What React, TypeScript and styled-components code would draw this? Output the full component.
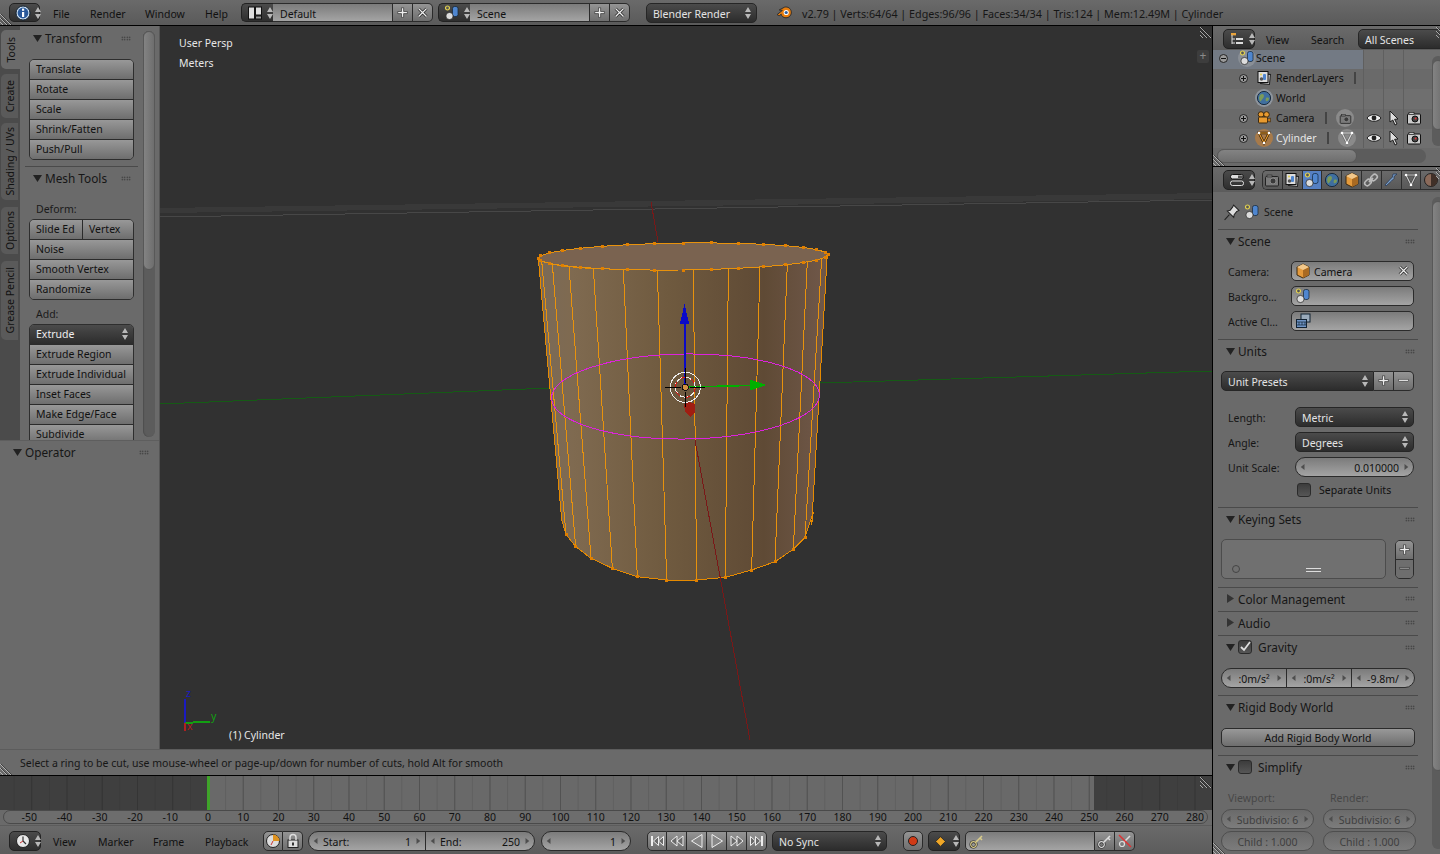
import React from 'react';
import styled, { createGlobalStyle } from 'styled-components';

const Global = createGlobalStyle`
  html, body { margin: 0; padding: 0; width: 1440px; height: 854px; overflow: hidden; background: #000; }
  body { font-family: "Noto Sans", "DejaVu Sans", sans-serif; font-size: 10.5px; color: #111; }
  * { box-sizing: border-box; }
`;

const Shell = styled.div`width:1440px;height:854px;display:flex;flex-direction:column;background:#000;`;
const TopBar = styled.div`
  position:relative;height:25px;flex:none;display:flex;align-items:center;padding-left:9px;
  background:linear-gradient(#6a6a6a,#5a5a5a);margin-bottom:1px;
`;
const Main = styled.div`flex:1;display:flex;min-height:0;gap:1px;`;
const LeftCol = styled.div`width:1212px;display:flex;flex-direction:column;gap:0;`;
const RightCol = styled.div`flex:1;display:flex;flex-direction:column;gap:1px;background:#000;`;
const Work = styled.div`height:723px;display:flex;flex:none;`;

/* generic widgets */
const Group = styled.div<{ $ml?: number }>`display:flex;height:19px;flex:none;margin-left:${p => p.$ml ?? 0}px;`;
const Selector = styled.div<{ $w: number }>`
  width:${p => p.$w}px;height:19px;flex:none;display:flex;align-items:center;gap:2px;padding-left:5px;
  background:linear-gradient(#4b4b4b,#2e2e2e);border:1px solid #222;border-radius:5px;
`;
const SelLeft = styled(Selector)`border-radius:5px 0 0 5px;border-right:0;`;
const Field = styled.div<{ $w?: number; $flex?: boolean; $pad?: number }>`
  width:${p => (p.$w ? p.$w + 'px' : 'auto')};${p => (p.$flex ? 'flex:1;' : '')}
  height:100%;flex-shrink:0;display:flex;align-items:center;padding:2px 0 0 ${p => p.$pad ?? 7}px;gap:4px;
  color:#111;background:linear-gradient(#7b7b7b,#a4a4a4);border:1px solid #2b2b2b;border-left:0;white-space:nowrap;
`;
const Square = styled.div<{ $w?: number; $last?: boolean; $dim?: boolean; $first?: boolean }>`
  width:${p => p.$w ?? 20}px;height:100%;flex:none;display:flex;align-items:center;justify-content:center;
  background:linear-gradient(#949494,#6e6e6e);border:1px solid #2b2b2b;border-left:${p => (p.$first ? '1px solid #2b2b2b' : '0')};
  border-radius:${p => (p.$last && p.$first ? '5px' : p.$last ? '0 5px 5px 0' : p.$first ? '5px 0 0 5px' : '0')};
`;
const DarkLabel = styled.span`color:#e4e4e4;white-space:nowrap;padding-top:2px;`;
const Dropdown = styled.div<{ $w?: number; $ml?: number; $flex?: boolean; $square?: boolean }>`
  ${p => (p.$w ? `width:${p.$w}px;` : '')}${p => (p.$flex ? 'flex:1;' : '')}
  height:20px;flex-shrink:0;margin-left:${p => p.$ml ?? 0}px;display:flex;align-items:center;justify-content:space-between;
  padding:0 3px 0 6px;color:#e4e4e4;background:linear-gradient(#4b4b4b,#2c2c2c);border:1px solid #262626;
  border-radius:${p => (p.$square ? '5px 0 0 5px' : '5px')};white-space:nowrap;
`;
const MenuItem = styled.span<{ $ml?: number; $w: number }>`
  margin-left:${p => p.$ml ?? 0}px;width:${p => p.$w}px;flex:none;padding-top:2px;color:#111;white-space:nowrap;
`;
const StatText = styled.span`margin-left:9px;padding-top:2px;color:#161616;white-space:nowrap;font-size:10.75px;`;
const Hatch = styled.svg<{ $corner: string }>`
  position:absolute;width:12px;height:12px;z-index:5;${p => p.$corner};
`;

/* shelf */
const Shelf = styled.div`width:160px;flex:none;display:flex;flex-direction:column;border-right:1px solid #555;`;
const ShelfTop = styled.div`position:relative;height:414px;flex:none;display:flex;background:#6a6a6a;overflow:hidden;`;
const TabStrip = styled.div`width:20px;flex:none;background:#4b4b4b;display:flex;flex-direction:column;align-items:flex-end;`;
const Tab = styled.div<{ $h: number; $active?: boolean; $mt: number }>`
  width:${p => (p.$active ? 19 : 17)}px;height:${p => p.$h}px;margin-top:${p => p.$mt}px;
  margin-right:${p => (p.$active ? 0 : 2)}px;
  background:${p => (p.$active ? '#6a6a6a' : '#5a5a5a')};border-radius:5px 0 0 5px;
  display:flex;align-items:center;justify-content:center;
  color:#111;
`;
const TabText = styled.span`writing-mode:vertical-rl;transform:rotate(180deg);white-space:nowrap;`;
const ShelfBody = styled.div`width:118px;flex:none;padding:0 0 0 5px;`;
const ShelfHeader = styled.div<{ $h?: number }>`
  height:${p => p.$h ?? 24}px;display:flex;align-items:center;padding:0 7px 0 8px;font-size:11.8px;color:#161616;
  gap:3px;
`;
const Grip = styled.div`margin-left:auto;width:10px;height:5px;flex:none;
  background-image:radial-gradient(circle,#2f2f2f 0.6px,transparent 0.9px);background-size:2.5px 2.5px;`;
const Sep = styled.div`height:1px;background:#4a4a4a;margin-top:6px;`;
const ShelfGroup = styled.div<{ $mt?: number }>`
  margin:${p => p.$mt ?? 0}px 0 0 4px;width:105px;border:1px solid #2e2e2e;border-radius:5px;
  display:flex;flex-direction:column;overflow:hidden;flex:none;
`;
const ToolBtn = styled.div<{ $dark?: boolean }>`
  height:20px;flex:none;display:flex;align-items:center;justify-content:space-between;padding:0 3px 1px 6px;
  color:${p => (p.$dark ? '#eee' : '#111')};
  background:${p => (p.$dark ? 'linear-gradient(#4b4b4b,#2c2c2c)' : 'linear-gradient(#989898,#6e6e6e)')};
  & + & { border-top:1px solid #2b2b2b; }
  &:first-child { height:19px; }
  white-space:nowrap;
`;
const ToolRow = styled.div`display:flex;height:19px;flex:none;& + ${ToolBtn}{border-top:1px solid #2b2b2b;}`;
const ToolCell = styled(ToolBtn)<{ $w: number }>`width:${p => p.$w}px;&&{height:100%;} & + &{border-top:0;border-left:1px solid #2b2b2b;}`;
const ShelfLabel = styled.div<{ $mt: number }>`margin:${p => p.$mt}px 0 0 11px;height:14px;line-height:14px;color:#1a1a1a;`;
const Track = styled.div<{ $h: number }>`
  position:absolute;left:143px;top:5px;width:12px;height:${p => p.$h}px;border-radius:6px;background:#5c5c5c;
  box-shadow:inset 1px 0 1px #4e4e4e;
`;
const Thumb = styled.div<{ $h: number }>`height:${p => p.$h}px;border-radius:6px;background:linear-gradient(90deg,#838383,#6e6e6e);border:1px solid #585858;`;
const Operator = styled.div`flex:1;background:#6a6a6a;border-top:1px solid #5e5e5e;position:relative;z-index:1;`;
const OpHeader = styled.div`height:24px;display:flex;align-items:center;gap:3px;padding:0 10px 2px 13px;font-size:11.8px;color:#161616;`;

/* viewport */
const Viewport = styled.div`position:relative;flex:1;background:#313131;overflow:hidden;`;
const Scene3D = styled.svg`position:absolute;left:0;top:0;width:1052px;height:723px;shape-rendering:crispEdges;`;
const VpLabel = styled.div<{ $l: number; $t: number; $c?: string }>`position:absolute;left:${p => p.$l}px;top:${p => p.$t}px;color:${p => p.$c ?? '#e6e6e6'};white-space:nowrap;line-height:14px;`;
const ExpandBtn = styled.div`position:absolute;right:3px;top:24px;width:12px;height:13px;background:#3d3d3d;color:#8a8a8a;
  font-size:12px;line-height:12px;text-align:center;border-radius:2px;`;
const HintBar = styled.div`height:26px;flex:none;display:flex;align-items:center;padding:0 0 0 20px;background:#6a6a6a;color:#161616;position:relative;white-space:nowrap;border-top:1px solid #5c5c5c;`;

/* timeline */
const Timeline = styled.div`flex:1;display:flex;flex-direction:column;border-top:1px solid #000;position:relative;background:#6a6a6a;`;
const Tracks = styled.div`
  height:34px;flex:none;display:flex;
  background-image:linear-gradient(90deg,#525252 1px,transparent 1px),linear-gradient(90deg,#5f5f5f 1px,transparent 1px);
  background-size:35.25px 100%,17.625px 100%;background-position:31.25px 0,13.6px 0;background-color:#696969;
`;
const OutRange = styled.div<{ $w: number }>`width:${p => p.$w}px;flex:none;height:100%;background:rgba(30,30,30,.55);`;
const InRange = styled.div`flex:1;`;
const FrameMark = styled.div`width:3px;height:100%;background:#3fa32a;flex:none;`;
const Ruler = styled.div`
  height:14px;margin:0 4px 0 3px;padding-left:10.1px;flex:none;display:flex;align-items:center;border:1px solid #4a4a4a;border-radius:7px;
  background:#6d6d6d;color:#111;
`;
const Tick = styled.span<{ $neg?: boolean }>`width:35.25px;flex:none;text-align:center;line-height:12px;padding-right:${p => (p.$neg ? 5 : 0)}px;`;
const TimeHead = styled.div`flex:1;display:flex;align-items:center;padding:2px 0 0 9px;margin-top:1px;border-top:1px solid #5c5c5c;background:linear-gradient(#6a6a6a,#5c5c5c);`;
const Pill = styled.div<{ $w?: number; $ml?: number; $dim?: boolean; $flex?: boolean }>`
  ${p => (p.$w ? `width:${p.$w}px;` : '')}${p => (p.$flex ? 'flex:1;min-width:0;' : '')}
  height:20px;flex-shrink:0;margin-left:${p => p.$ml ?? 0}px;display:flex;align-items:center;
  border:1px solid ${p => (p.$dim ? '#4e4e4e' : '#2b2b2b')};border-radius:10px;color:${p => (p.$dim ? '#3f3f3f' : '#111')};
  background:${p => (p.$dim ? 'linear-gradient(#6a6a6a,#7c7c7c)' : 'linear-gradient(#7b7b7b,#a4a4a4)')};overflow:hidden;
`;
const PillCell = styled.div<{ $w?: number; $div?: boolean }>`
  ${p => (p.$w ? `width:${p.$w}px;flex:none;` : 'flex:1;')}height:100%;display:flex;align-items:center;justify-content:space-between;
  padding:0 4px;gap:4px;white-space:nowrap;${p => (p.$div ? 'border-left:1px solid #2b2b2b;' : '')}
`;
const CellText = styled.span<{ $grow?: boolean; $right?: boolean }>`
  ${p => (p.$grow ? 'flex:1;' : '')}${p => (p.$right ? 'text-align:right;' : '')}white-space:nowrap;padding-top:2px;
`;

/* outliner */
const Outliner = styled.div`height:140px;flex:none;position:relative;display:flex;flex-direction:column;background:#6a6a6a;`;
const OutHead = styled.div`height:24px;flex:none;display:flex;align-items:center;padding:2px 0 0 10px;background:linear-gradient(#6a6a6a,#5c5c5c);`;
const OutTree = styled.div`position:relative;height:98px;flex:none;overflow:hidden;
  &::before{content:"";position:absolute;left:30px;top:16px;bottom:0;width:1px;background:#2f2f2f;}
`;
const Row = styled.div<{ $h?: number; $odd?: boolean }>`
  height:${p => p.$h ?? 20}px;flex:none;display:flex;align-items:center;position:relative;
  background:${p => (p.$odd ? '#6f6f6f' : '#6a6a6a')};
`;
const RowMain = styled.div<{ $hi?: boolean }>`
  width:150px;height:100%;flex:none;display:flex;align-items:center;position:relative;padding-bottom:${p => (p.$hi ? 3 : 2)}px;
  background:${p => (p.$hi ? '#737a84' : 'transparent')};
`;
const RowCol = styled.div`width:20px;height:100%;flex:none;display:flex;align-items:center;justify-content:center;padding-bottom:2px;border-left:1px solid #5f5f5f;`;
const Expander = styled.div<{ $x: number }>`position:absolute;left:${p => p.$x}px;width:9px;height:9px;border:1px solid #222;border-radius:50%;background:#9a9a9a;
  color:#111;display:flex;align-items:center;justify-content:center;z-index:2;
  &::before{content:"";position:absolute;width:5px;height:1px;background:#111;left:1px;top:3px;}
`;
const ExpanderPlus = styled(Expander)`&::after{content:"";position:absolute;width:1px;height:5px;background:#111;left:3px;top:1px;}`;
const RowIcon = styled.div<{ $x: number; $bg?: string }>`position:absolute;left:${p => p.$x}px;width:18px;height:18px;border-radius:50%;display:flex;align-items:center;justify-content:center;background:${p => p.$bg ?? 'transparent'};`;
const RowName = styled.span<{ $x: number; $light?: boolean }>`position:absolute;left:${p => p.$x}px;white-space:nowrap;color:${p => (p.$light ? '#e6e6e6' : '#111')};`;
const RowBar = styled.div<{ $x: number }>`position:absolute;left:${p => p.$x}px;width:2px;height:12px;background:#444;`;
const HScroll = styled.div`position:absolute;left:4px;right:22px;top:123px;height:14px;border-radius:7px;background:#5c5c5c;`;
const HThumb = styled.div`width:140px;height:100%;border-radius:7px;background:linear-gradient(#838383,#6e6e6e);border:1px solid #585858;`;
const VScroll = styled.div<{ $t: number; $h: number }>`position:absolute;right:4px;top:${p => p.$t}px;width:12px;height:${p => p.$h}px;border-radius:6px;background:#5c5c5c;`;
const VThumb = styled.div<{ $h: number }>`height:${p => p.$h}px;margin-top:4px;border-radius:6px;background:linear-gradient(90deg,#838383,#6e6e6e);border:1px solid #585858;`;

/* properties */
const Props = styled.div`flex:1;position:relative;background:#6a6a6a;overflow:hidden;display:flex;flex-direction:column;`;
const PropHead = styled.div`height:25px;flex:none;display:flex;align-items:center;padding-left:10px;background:linear-gradient(#6a6a6a,#5c5c5c);`;
const TabsRow = styled.div`display:flex;height:20px;margin-left:7px;border:1px solid #2e2e2e;border-right:0;border-radius:5px 0 0 5px;overflow:hidden;`;
const PropTab = styled.div<{ $active?: boolean }>`width:19.8px;flex:none;height:100%;display:flex;align-items:center;justify-content:center;
  background:${p => (p.$active ? '#5680c2' : 'linear-gradient(#6a6a6a,#585858)')};border-right:1px solid #2e2e2e;`;
const Context = styled.div`height:37px;flex:none;display:flex;align-items:center;gap:4px;padding:3px 0 0 10px;color:#161616;`;
const PropBody = styled.div`width:200px;margin-left:5px;`;
const Panel = styled.div<{ $pb?: number }>`border-top:1px solid #4a4a4a;padding-bottom:${p => p.$pb ?? 0}px;`;
const PanelHead = styled.div<{ $h?: number }>`height:${p => p.$h ?? 24}px;display:flex;align-items:center;padding:0 3px 2px 8px;gap:3px;font-size:11.8px;color:#161616;white-space:nowrap;`;
const PanelContent = styled.div<{ $pt?: number; $gap?: number }>`padding:${p => p.$pt ?? 7}px 4px 0 3px;display:flex;flex-direction:column;gap:${p => p.$gap ?? 5}px;`;
const LabelRow = styled.div<{ $mt?: number }>`display:flex;align-items:center;height:20px;padding-left:7px;margin-top:${p => p.$mt ?? 0}px;`;
const RowLabel = styled.span<{ $w: number }>`width:${p => p.$w}px;flex:none;padding-top:2px;color:#161616;white-space:nowrap;overflow:hidden;`;
const BoxField = styled.div`flex:1;height:20px;display:flex;align-items:center;gap:3px;padding:0 2px 0 3px;color:#111;
  background:linear-gradient(#7b7b7b,#a4a4a4);border:1px solid #2b2b2b;border-radius:5px;`;
const FieldText = styled.span`padding-top:2px;white-space:nowrap;`;
const ClearSlot = styled.span`margin-left:auto;display:flex;`;
const PresetRow = styled.div`display:flex;height:20px;`;
const CheckRow = styled.div`display:flex;align-items:center;height:16px;padding-left:76px;gap:8px;`;
const Check = styled.div`width:14px;height:14px;flex:none;border-radius:3px;background:linear-gradient(#3c3c3c,#565656);border:1px solid #2b2b2b;display:flex;align-items:center;justify-content:center;`;
const ListRow = styled.div`display:flex;gap:9px;`;
const ListBox = styled.div`width:166px;height:40px;position:relative;border:1px solid #4c4c4c;border-radius:5px;background:#707070;`;
const ListCols = styled.div`width:19px;height:39px;margin-top:1px;display:flex;flex-direction:column;border:1px solid #2b2b2b;border-radius:5px;overflow:hidden;`;
const ListBtn = styled.div<{ $dim?: boolean }>`flex:1;display:flex;align-items:center;justify-content:center;background:${p => (p.$dim ? '#6e6e6e' : 'linear-gradient(#949494,#6e6e6e)')};
  ${p => (p.$dim ? 'border-top:1px solid #2b2b2b;' : '')}`;
const Grabber = styled.div`position:absolute;left:84px;bottom:6px;width:15px;height:4px;border-top:1px solid #ddd;border-bottom:1px solid #ddd;`;
const AddMini = styled.div`position:absolute;left:10px;bottom:5px;width:8px;height:8px;border:1px solid #444;border-radius:50%;`;
const FullBtn = styled.div`width:194px;height:19px;display:flex;align-items:center;justify-content:center;padding-top:1px;color:#111;
  background:linear-gradient(#989898,#6e6e6e);border:1px solid #2b2b2b;border-radius:5px;`;
const TwoCol = styled.div`display:flex;gap:9px;`;
const Col = styled.div`width:93px;display:flex;flex-direction:column;gap:2px;flex:none;`;
const ColLabel = styled.div`height:14px;margin:0 0 2px 7px;color:#474747;line-height:14px;`;
const Centered = styled(PillCell)`justify-content:center;`;

/* icons */
const Ico = styled.svg<{ $s?: number }>`width:${p => p.$s ?? 16}px;height:${p => p.$s ?? 16}px;flex:none;display:block;`;
const I = ({ s, children }: { s?: number; children: React.ReactNode }) => <Ico $s={s} viewBox="0 0 16 16">{children}</Ico>;

const ArrowPair = styled.svg`width:10px;height:14px;flex:none;display:block;`;
const UpDown = ({ c = '#b8b8b8' }: { c?: string }) => (
  <ArrowPair viewBox="0 0 10 14"><path d="M5 1l3 5H2zM5 13l3-5H2z" fill={c} /></ArrowPair>
);
const Tri = ({ open }: { open?: boolean }) => (
  <Ico $s={9} viewBox="0 0 9 9">{open ? <path d="M0 1h9L4.500 8z" fill="#222" /> : <path d="M1 0l7 4.500L1 9z" fill="#333" />}</Ico>
);
const ArrL = () => <Ico $s={6} viewBox="0 0 6 8"><path d="M5 0v8L0 4z" fill="#4e4e4e" /></Ico>;
const ArrR = () => <Ico $s={6} viewBox="0 0 6 8"><path d="M1 0v8l5-4z" fill="#4e4e4e" /></Ico>;
const Info = () => <I><circle cx="8" cy="8" r="7" fill="#cfe0f0" stroke="#123" /><circle cx="8" cy="8" r="5.400" fill="#28589a" /><rect x="7" y="7" width="2.200" height="5" fill="#fff" /><rect x="7" y="3.600" width="2.200" height="2.200" fill="#fff" /></I>;
const LayoutI = () => <I><rect x="1.500" y="2" width="6" height="12" fill="#ddd" stroke="#111" /><rect x="8.500" y="2" width="6" height="8" fill="#ddd" stroke="#111" /><rect x="8.500" y="11" width="6" height="3" fill="#999" stroke="#111" /></I>;
const SceneI = () => <I><circle cx="3.500" cy="3" r="2" fill="#555" stroke="#e3d24f" strokeWidth="1.200" /><rect x="8.500" y="1.500" width="5.500" height="10" rx="2" fill="#4f86cf" stroke="#123" strokeWidth=".7" /><circle cx="5.500" cy="11" r="3.600" fill="#ddd" stroke="#222" strokeWidth=".7" /></I>;
const PlusI = ({ c = '#eee' }: { c?: string }) => <I s={14}><path d="M6.300 2h2.400v4.300H13v2.400H8.700V13H6.300V8.700H2V6.300h4.300z" fill={c} stroke="#222" strokeWidth=".7" /></I>;
const MinusI = ({ c = '#ddd' }: { c?: string }) => <I s={14}><rect x="2" y="6" width="11" height="2.400" fill={c} stroke="#333" strokeWidth=".6" /></I>;
const XI = () => <I s={14}><path d="M3 3l9 9M12 3l-9 9" stroke="#222" strokeWidth="3.200" /><path d="M3 3l9 9M12 3l-9 9" stroke="#eee" strokeWidth="1.600" /></I>;
const Logo = () => <I s={17}><path d="M1 10l5-4-3-.4L8 3c3-.8 6 1 6.400 4.400.3 3-2 5.600-5 5.600-2.500 0-4.200-1.600-4.500-3.400L3 11z" fill="#e87d0d" stroke="#2b2b2b" strokeWidth=".9" /><circle cx="9.600" cy="8" r="2.400" fill="#fff" /><circle cx="9.600" cy="8" r="1.500" fill="#2f5e9c" /></I>;
const OutI = () => <I><rect x="2" y="2" width="5" height="2.400" fill="#e8a33c" /><path d="M3 4v9M3 8h3M3 12h3" stroke="#ddd" /><rect x="7" y="7" width="7" height="2" fill="#ddd" /><rect x="7" y="11" width="7" height="2" fill="#ddd" /></I>;
const PropsI = () => <I><rect x="1.500" y="2.500" width="13" height="4.500" rx="2" fill="#ddd" stroke="#111" /><rect x="1.500" y="9" width="13" height="4.500" rx="2" fill="none" stroke="#ddd" /><rect x="9" y="3.500" width="5" height="2.600" fill="#555" /></I>;
const CubeI = () => <I><path d="M8 1l6 3v8l-6 3-6-3V4z" fill="#e49a3c" stroke="#3c2a10" /><path d="M8 7l6-3v8l-6 3z" fill="#a96a22" /><path d="M2 4l6 3 6-3-6-3z" fill="#f2c78a" /></I>;
const CamOrange = () => <I><circle cx="5" cy="4.500" r="2.800" fill="#e89a2f" stroke="#3c2a10" /><circle cx="10.500" cy="4.500" r="2.800" fill="#e89a2f" stroke="#3c2a10" /><rect x="2.500" y="7" width="9" height="6" rx="1" fill="#e89a2f" stroke="#3c2a10" /><path d="M11.500 9l3-1v4l-3-1z" fill="#c67a1b" stroke="#3c2a10" strokeWidth=".6" /></I>;
const MeshI = ({ c = '#f0a030', d = '#2a1a05' }: { c?: string; d?: string }) => <I><path d="M3 3h10L8 13z" fill="none" stroke={d} strokeWidth="2.400" /><path d="M3 3h10L8 13z" fill="none" stroke={c} strokeWidth="1.100" /><circle cx="3" cy="3" r="1.300" fill="#fff" /><circle cx="13" cy="3" r="1.300" fill="#fff" /><circle cx="8" cy="13" r="1.300" fill="#fff" /></I>;
const WorldI = () => <I><circle cx="8" cy="8" r="6.600" fill="#3f6f9f" stroke="#1a2c40" /><path d="M4 5c2-2 4-1 4 1S6 9 5 11 2 8 4 5zM10 8c2-1 3 0 3 1s-2 3-3 2 0-2 0-3z" fill="#7a9a5a" /></I>;
const LayersI = () => <I><rect x="5" y="4" width="9" height="10" fill="#bbb" stroke="#222" transform="rotate(6 9 9)" /><rect x="2" y="1.500" width="10" height="11" fill="#ddd" stroke="#111" /><circle cx="5" cy="4.500" r="1" fill="#e3d24f" /><rect x="7" y="4" width="3" height="6" rx="1" fill="#4f86cf" /><circle cx="5.500" cy="9" r="1.800" fill="#555" /></I>;
const EyeI = () => <I><path d="M1 8c3-4.500 11-4.500 14 0-3 4.500-11 4.500-14 0z" fill="#eee" stroke="#222" /><circle cx="8" cy="8" r="2.400" fill="#222" /></I>;
const CursorI = () => <I><path d="M4 1l8 8-3.400.3L11 14l-2 1-2.200-5L4 12z" fill="#ddd" stroke="#111" strokeWidth=".9" /></I>;
const RenderI = () => <I><rect x="1.500" y="4" width="13" height="10" rx="1" fill="#ccc" stroke="#111" /><rect x="3" y="2.500" width="5" height="2" fill="#ccc" stroke="#111" strokeWidth=".6" /><circle cx="9" cy="9" r="3" fill="#444" stroke="#111" /><circle cx="9.600" cy="8.600" r="1" fill="#d33" /></I>;
const PinI = () => <I s={17}><path d="M10 1l5 5-2 1-2.500 3-.4 2.600-6-6L6.700 6l2.300-3zM6 10l-4.500 5" fill="#ddd" stroke="#222" /></I>;
const LinkI = () => <I><path d="M6 10L10 6" stroke="#bbb" strokeWidth="2" /><rect x="1.500" y="8" width="7" height="5" rx="2.400" fill="none" stroke="#bbb" strokeWidth="1.600" transform="rotate(-45 5 10.500)" /><rect x="7.500" y="3" width="7" height="5" rx="2.400" fill="none" stroke="#bbb" strokeWidth="1.600" transform="rotate(-45 11 5.500)" /></I>;
const WrenchI = () => <I><path d="M14 2l-3 2.500v2L8.500 9 3 14 2 13l5-5.500L9.500 5l.5-3z" fill="#7b9fc8" stroke="#1e3050" strokeWidth=".7" /></I>;
const MatI = () => <I><circle cx="8" cy="8" r="6.500" fill="#8a6a5a" stroke="#222" /><path d="M8 1.500A6.500 6.500 0 0 1 8 14.500z" fill="#403028" /></I>;
const CamGrey = ({ s }: { s?: number }) => <I s={s}><rect x="1.500" y="4.500" width="13" height="9.500" rx="1" fill="#7a7a7a" stroke="#222" /><circle cx="9" cy="9" r="3" fill="#3a3a3a" stroke="#888" /><rect x="3" y="3" width="5" height="2" fill="#7a7a7a" stroke="#222" strokeWidth=".6" /></I>;
const ClipI = () => <I><rect x="6" y="1" width="9" height="8" fill="#9ab" stroke="#123" /><rect x="1.500" y="6.500" width="10" height="8" fill="#6f95c7" stroke="#123" /><path d="M1.500 9h10M1.500 12h10M4 9v3M7 9v3M10 9v3" stroke="#123" strokeWidth=".7" /></I>;
const CheckMark = () => <Ico $s={12} viewBox="0 0 12 12"><path d="M2 6l3 3 6-8" fill="none" stroke="#ddd" strokeWidth="1.800" /></Ico>;
const ClockI = () => <I><circle cx="8" cy="8" r="6.500" fill="#e8e8e8" stroke="#222" /><path d="M8 8V3.500M8 8l3 3" stroke="#333" strokeWidth="1.200" /><path d="M8 8l-3 2" stroke="#c33" /></I>;
const SyncI = () => <I><circle cx="8" cy="8" r="6.500" fill="#ddd" stroke="#222" /><path d="M8 8V1.500A6.500 6.500 0 0 1 14.500 8z" fill="#e09320" /><path d="M8 8l-2 4" stroke="#c33" /></I>;
const LockI = () => <I><rect x="3" y="7" width="10" height="7.500" fill="#ddd" stroke="#222" /><path d="M5 7V4.500a3 3 0 0 1 6 0V7" fill="none" stroke="#ddd" strokeWidth="1.500" /><rect x="7" y="9.500" width="2" height="3" fill="#333" /></I>;
const Jump = ({ dir, kind }: { dir: 'l' | 'r'; kind: 'end' | 'key' | 'play' }) => {
  const flip = dir === 'l' ? 'translate(16 0) scale(-1 1)' : undefined;
  const s = { fill: '#6a6a6a', stroke: '#eee', strokeWidth: 1 };
  return (
    <I>
      <g transform={flip}>
        {kind === 'play' && <path d="M3 1.500L13.500 8 3 14.500z" {...s} fill="#888" />}
        {kind === 'key' && <><path d="M2 3l6 5-6 5z" {...s} /><path d="M8 3l6 5-6 5z" {...s} /></>}
        {kind === 'end' && <><path d="M1.500 3.500l5 4.500-5 4.500z" {...s} /><path d="M6.500 3.500l5 4.500-5 4.500z" {...s} /><path d="M13 3v10" stroke="#eee" strokeWidth="2" /></>}
      </g>
    </I>
  );
};
const RecordI = () => <I><circle cx="8" cy="8" r="4.500" fill="#d03a16" stroke="#222" /></I>;
const DiamondI = () => <I s={13}><path d="M8 2l6 6-6 6-6-6z" fill="#f0a727" stroke="#222" /></I>;
const KeyI = ({ c = '#d9cc8a' }: { c?: string }) => <I><circle cx="4.500" cy="11.500" r="2.800" fill="none" stroke="#222" strokeWidth="2.400" /><circle cx="4.500" cy="11.500" r="2.800" fill="none" stroke={c} strokeWidth="1.200" /><path d="M6.500 9.500L13 3M11 5l2 2" stroke={c} strokeWidth="1.600" /></I>;
const KeyXI = () => <I><circle cx="5" cy="11" r="2.500" fill="none" stroke="#ddd" strokeWidth="1.200" /><path d="M7 9l6-6" stroke="#ddd" strokeWidth="1.600" /><path d="M2 2l12 12" stroke="#d33" strokeWidth="1.500" /></I>;

const HatchMark = ({ corner }: { corner: string }) => (
  <Hatch $corner={corner} viewBox="0 0 12 12"><path d="M0 1l11 11M0 5l7 7M0 9l3 3" stroke="#c4c4c4" strokeWidth=".8" /><path d="M1 1l11 11M1 5l7 7" stroke="#222" strokeWidth=".6" /></Hatch>
);

/* 3D scene in page coordinates */
const zx = (z: number) => 520 + z / 3;
const zy = (z: number) => 230 + z / 3;
const tops: [number, number][] = [[65, 92], [97, 103], [147, 110], [220, 116], [310, 118], [412, 118], [520, 118], [625, 115], [720, 110], [802, 103], [862, 95], [905, 85]];
const bots: [number, number][] = [[138, 913], [167, 950], [213, 985], [277, 1015], [352, 1040], [440, 1050], [530, 1050], [616, 1042], [695, 1020], [765, 995], [820, 958], [855, 922]];
const pt = ([x, y]: [number, number]) => `${zx(x).toFixed(1)},${zy(y).toFixed(1)}`;
const body = [[55, 85], ...tops, [922, 72], [875, 885], [880, 845], ...[...bots].reverse(), [125, 870]] as [number, number][];

const ringVerts: [number, number][] = Array.from({ length: 32 }, (_, i) => {
  const a = (i / 32) * Math.PI * 2;
  return [683 + 145 * Math.cos(a), 256.5 - 1.8 * Math.cos(a) + 13.5 * Math.sin(a)];
});

const Scene = () => (
  <Scene3D viewBox="160 26 1052 723">
    <defs>
      <linearGradient id="body" x1="0" x2="1" y1="0" y2="0">
        <stop offset="0" stopColor="#7a6a58" />
        <stop offset=".12" stopColor="#7f6a50" />
        <stop offset=".45" stopColor="#6f5a3f" />
        <stop offset=".78" stopColor="#5f4a35" />
        <stop offset="1" stopColor="#70584a" />
      </linearGradient>
    </defs>
    <path d="M160 208L1212 193V199L160 213z" fill="#393939" />
    <path d="M160 217L1212 200" stroke="#474747" strokeWidth="1" fill="none" />
    <path d="M160 404L551 388M820 383L1212 371" stroke="#155a15" strokeWidth="1" />
    <path d="M651 202L658 242" stroke="#7a1818" strokeWidth="1" />
    <polygon points={body.map(pt).join(' ')} fill="url(#body)" stroke="#e68a00" strokeWidth="1" />
    {tops.map((t, i) => (
      <line key={i} x1={zx(t[0])} y1={zy(t[1])} x2={zx(bots[i][0])} y2={zy(bots[i][1])} stroke="#e8920c" strokeWidth="1" />
    ))}
    <polygon points={ringVerts.map(v => v.join(',')).join(' ')} fill="#7a6350" stroke="#e8920c" strokeWidth="1" />
    {[...ringVerts, ...bots.map(b => [zx(b[0]), zy(b[1])] as [number, number])].map((v, i) => (
      <rect key={i} x={v[0] - 1.5} y={v[1] - 1.5} width="3" height="3" fill="#e07f00" />
    ))}
    <path d="M695 440L750 740" stroke="#7a1818" strokeWidth="1" />
    <ellipse cx="685.500" cy="396.500" rx="134" ry="42.500" transform="rotate(-0.7 685.500 396.500)" fill="none" stroke="#dd22dd" strokeWidth="1" />
    <path d="M685 387V324" stroke="#0a0ac8" strokeWidth="1.500" />
    <path d="M680 323.500h9L684.500 304z" fill="#0a0ac8" />
    <path d="M685 387L750 385.500" stroke="#00b000" strokeWidth="1.500" />
    <path d="M750 379.500v11L767 385z" fill="#00b000" />
    <path d="M684 404l5-2 6 2 0 8-5 5-5-6z" fill="#a01e12" />
    <circle cx="685.300" cy="387.300" r="15" fill="none" stroke="#eee" strokeWidth="1" />
    <circle cx="685.300" cy="387.300" r="10" fill="none" stroke="#eee" strokeWidth="1" />
    <circle cx="685.300" cy="387.300" r="10" fill="none" stroke="#e01010" strokeWidth="1" strokeDasharray="5.200 5.270" />
    <path d="M665 387.300H681M690 387.300H705M685.300 367.500V383M685.300 392V407" stroke="#000" strokeWidth="1" />
    <circle cx="685.300" cy="387.300" r="3" fill="#d09040" stroke="#111" />
    <path d="M185 723V699" stroke="#1a1ac0" strokeWidth="2" />
    <path d="M185 723L210 721.500" stroke="#12a012" strokeWidth="2" />
    <path d="M185 723V731" stroke="#b02020" strokeWidth="2" />
  </Scene3D>
);

const tools1 = ['Translate', 'Rotate', 'Scale', 'Shrink/Fatten', 'Push/Pull'];
const tools2 = ['Noise', 'Smooth Vertex', 'Randomize'];
const tools3 = ['Extrude Region', 'Extrude Individual', 'Inset Faces', 'Make Edge/Face', 'Subdivide'];
const frames = Array.from({ length: 34 }, (_, i) => (i - 5) * 10);

export default function App() {
  return (
    <Shell>
      <Global />
      <TopBar>
        <HatchMark corner="left:0;bottom:0;" />
        <Selector $w={31}><Info /><UpDown /></Selector>
        <MenuItem $ml={13} $w={37}>File</MenuItem>
        <MenuItem $w={55}>Render</MenuItem>
        <MenuItem $w={60}>Window</MenuItem>
        <MenuItem $w={36}>Help</MenuItem>
        <Group>
          <SelLeft $w={32}><LayoutI /><UpDown /></SelLeft>
          <Field $w={120}>Default</Field>
          <Square><PlusI /></Square>
          <Square $last><XI /></Square>
        </Group>
        <Group $ml={5}>
          <SelLeft $w={32}><SceneI /><UpDown /></SelLeft>
          <Field $w={120}>Scene</Field>
          <Square><PlusI /></Square>
          <Square $last><XI /></Square>
        </Group>
        <Dropdown $w={111} $ml={16}><DarkLabel>Blender Render</DarkLabel><UpDown /></Dropdown>
        <Group $ml={19} style={{ alignItems: 'center' }}><Logo /></Group>
        <StatText>v2.79 | Verts:64/64 | Edges:96/96 | Faces:34/34 | Tris:124 | Mem:12.49M | Cylinder</StatText>
      </TopBar>
      <Main>
        <LeftCol>
          <Work>
            <Shelf>
              <ShelfTop>
                <TabStrip>
                  <Tab $mt={4} $h={39} $active><TabText>Tools</TabText></Tab>
                  <Tab $mt={5} $h={44}><TabText>Create</TabText></Tab>
                  <Tab $mt={5} $h={77}><TabText>Shading / UVs</TabText></Tab>
                  <Tab $mt={7} $h={47}><TabText>Options</TabText></Tab>
                  <Tab $mt={7} $h={79}><TabText>Grease Pencil</TabText></Tab>
                </TabStrip>
                <ShelfBody>
                  <ShelfHeader><Tri open />Transform<Grip /></ShelfHeader>
                  <ShelfGroup $mt={9}>{tools1.map(t => <ToolBtn key={t}>{t}</ToolBtn>)}</ShelfGroup>
                  <Sep />
                  <ShelfHeader $h={22}><Tri open />Mesh Tools<Grip /></ShelfHeader>
                  <ShelfLabel $mt={13}>Deform:</ShelfLabel>
                  <ShelfGroup $mt={3}>
                    <ToolRow><ToolCell $w={52}>Slide Ed</ToolCell><ToolCell $w={52}>Vertex</ToolCell></ToolRow>
                    {tools2.map(t => <ToolBtn key={t}>{t}</ToolBtn>)}
                  </ShelfGroup>
                  <ShelfLabel $mt={7}>Add:</ShelfLabel>
                  <ShelfGroup $mt={3}>
                    <ToolBtn $dark>Extrude<UpDown /></ToolBtn>
                    {tools3.map(t => <ToolBtn key={t}>{t}</ToolBtn>)}
                  </ShelfGroup>
                </ShelfBody>
                <Track $h={406}><Thumb $h={239} /></Track>
              </ShelfTop>
              <Operator><OpHeader><Tri open />Operator<Grip /></OpHeader></Operator>
            </Shelf>
            <Viewport>
              <Scene />
              <VpLabel $l={19} $t={10}>User Persp</VpLabel>
              <VpLabel $l={19} $t={30}>Meters</VpLabel>
              <VpLabel $l={69} $t={702}>(1) Cylinder</VpLabel>
              <VpLabel $l={26} $t={660} $c="#1a1ac0">z</VpLabel>
              <VpLabel $l={51} $t={683} $c="#12a012">y</VpLabel>
              <VpLabel $l={27} $t={693} $c="#b02020">x</VpLabel>
              <ExpandBtn>+</ExpandBtn>
              <HatchMark corner="right:0;top:0;" />
            </Viewport>
          </Work>
          <HintBar>Select a ring to be cut, use mouse-wheel or page-up/down for number of cuts, hold Alt for smooth<HatchMark corner="left:0;bottom:0;" /></HintBar>
          <Timeline>
            <HatchMark corner="right:0;top:0;" />
            <Tracks>
              <OutRange $w={207} /><FrameMark /><InRange /><OutRange $w={118} />
            </Tracks>
            <Ruler>{frames.map(f => <Tick key={f} $neg={f < 0}>{f}</Tick>)}</Ruler>
            <TimeHead>
              <Selector $w={32} style={{ height: 20 }}><ClockI /><UpDown /></Selector>
              <MenuItem $ml={12} $w={45}>View</MenuItem>
              <MenuItem $w={55}>Marker</MenuItem>
              <MenuItem $w={52}>Frame</MenuItem>
              <MenuItem $w={58}>Playback</MenuItem>
              <Group style={{ height: 20 }}>
                <Square $first><SyncI /></Square>
                <Square $last><LockI /></Square>
              </Group>
              <Pill $w={227} $ml={5}>
                <PillCell $w={116}><ArrL /><CellText $grow>Start:</CellText><CellText>1</CellText><ArrR /></PillCell>
                <PillCell $div><ArrL /><CellText $grow>End:</CellText><CellText>250</CellText><ArrR /></PillCell>
              </Pill>
              <Pill $w={90} $ml={6}><PillCell><ArrL /><CellText $grow $right>1</CellText><ArrR /></PillCell></Pill>
              <Group $ml={16} style={{ height: 20 }}>
                <Square $first><Jump dir="l" kind="end" /></Square>
                <Square><Jump dir="l" kind="key" /></Square>
                <Square><Jump dir="l" kind="play" /></Square>
                <Square><Jump dir="r" kind="play" /></Square>
                <Square><Jump dir="r" kind="key" /></Square>
                <Square $last><Jump dir="r" kind="end" /></Square>
              </Group>
              <Dropdown $w={115} $ml={5}><DarkLabel>No Sync</DarkLabel><UpDown /></Dropdown>
              <Group $ml={16} style={{ height: 20 }}><Square $first $last><RecordI /></Square></Group>
              <Selector $w={32} style={{ marginLeft: 5, height: 20, gap: 4 }}><DiamondI /><UpDown /></Selector>
              <Group $ml={5} style={{ height: 20 }}>
                <Pill $w={130} style={{ borderRadius: '5px 0 0 5px', paddingLeft: 3 }}><KeyI /></Pill>
                <Square><KeyI c="#ddd" /></Square>
                <Square $last><KeyXI /></Square>
              </Group>
            </TimeHead>
          </Timeline>
        </LeftCol>
        <RightCol>
          <Outliner>
            <HatchMark corner="right:0;top:0;" />
            <HatchMark corner="left:0;bottom:0;" />
            <OutHead>
              <Selector $w={32} style={{ height: 20 }}><OutI /><UpDown /></Selector>
              <MenuItem $ml={11} $w={45}>View</MenuItem>
              <MenuItem $w={47}>Search</MenuItem>
              <Dropdown $w={90} $square><DarkLabel>All Scenes</DarkLabel></Dropdown>
            </OutHead>
            <OutTree>
              <Row $h={19} $odd>
                <RowMain $hi>
                  <Expander $x={6} />
                  <RowIcon $x={25} $bg="#8a8f96"><SceneI /></RowIcon>
                  <RowName $x={43}>Scene</RowName>
                </RowMain>
                <RowCol /><RowCol /><RowCol />
              </Row>
              <Row>
                <RowMain>
                  <ExpanderPlus $x={26} />
                  <RowIcon $x={42}><LayersI /></RowIcon>
                  <RowName $x={63}>RenderLayers</RowName>
                  <RowBar $x={141} />
                </RowMain>
                <RowCol /><RowCol /><RowCol />
              </Row>
              <Row $odd>
                <RowMain>
                  <RowIcon $x={42} $bg="#8d949c"><WorldI /></RowIcon>
                  <RowName $x={63}>World</RowName>
                </RowMain>
                <RowCol /><RowCol /><RowCol />
              </Row>
              <Row>
                <RowMain>
                  <ExpanderPlus $x={26} />
                  <RowIcon $x={42}><CamOrange /></RowIcon>
                  <RowName $x={63}>Camera</RowName>
                  <RowBar $x={112} />
                  <RowIcon $x={123} $bg="#8a8a8a"><CamGrey s={13} /></RowIcon>
                </RowMain>
                <RowCol><EyeI /></RowCol><RowCol><CursorI /></RowCol><RowCol><RenderI /></RowCol>
              </Row>
              <Row $odd>
                <RowMain>
                  <ExpanderPlus $x={26} />
                  <RowIcon $x={42} $bg="#a77a4a"><MeshI /></RowIcon>
                  <RowName $x={63} $light>Cylinder</RowName>
                  <RowBar $x={114} />
                  <RowIcon $x={125} $bg="#8a8a8a"><MeshI c="#ddd" d="#666" /></RowIcon>
                </RowMain>
                <RowCol><EyeI /></RowCol><RowCol><CursorI /></RowCol><RowCol><RenderI /></RowCol>
              </Row>
            </OutTree>
            <VScroll $t={30} $h={90}><VThumb $h={70} /></VScroll>
            <HScroll><HThumb /></HScroll>
          </Outliner>
          <Props>
            <HatchMark corner="right:0;top:0;" />
            <HatchMark corner="left:0;bottom:0;" />
            <PropHead>
              <Selector $w={32} style={{ height: 20 }}><PropsI /><UpDown /></Selector>
              <TabsRow>
                <PropTab><CamGrey /></PropTab>
                <PropTab><LayersI /></PropTab>
                <PropTab $active><SceneI /></PropTab>
                <PropTab><WorldI /></PropTab>
                <PropTab><CubeI /></PropTab>
                <PropTab><LinkI /></PropTab>
                <PropTab><WrenchI /></PropTab>
                <PropTab><MeshI c="#ccc" d="#444" /></PropTab>
                <PropTab><MatI /></PropTab>
              </TabsRow>
            </PropHead>
            <Context><PinI /><SceneI /><span>Scene</span></Context>
            <PropBody>
              <Panel $pb={8}>
                <PanelHead><Tri open />Scene<Grip /></PanelHead>
                <PanelContent>
                  <LabelRow><RowLabel $w={63}>Camera:</RowLabel><BoxField><CubeI /><FieldText>Camera</FieldText><ClearSlot><XI /></ClearSlot></BoxField></LabelRow>
                  <LabelRow><RowLabel $w={63}>Backgro…</RowLabel><BoxField><SceneI /></BoxField></LabelRow>
                  <LabelRow><RowLabel $w={63}>Active Cl…</RowLabel><BoxField><ClipI /></BoxField></LabelRow>
                </PanelContent>
              </Panel>
              <Panel $pb={9}>
                <PanelHead><Tri open />Units<Grip /></PanelHead>
                <PanelContent>
                  <PresetRow>
                    <Dropdown $flex $square><DarkLabel>Unit Presets</DarkLabel><UpDown /></Dropdown>
                    <Square><PlusI /></Square>
                    <Square $last><MinusI /></Square>
                  </PresetRow>
                  <LabelRow $mt={11}><RowLabel $w={67}>Length:</RowLabel><Dropdown $flex><DarkLabel>Metric</DarkLabel><UpDown /></Dropdown></LabelRow>
                  <LabelRow><RowLabel $w={67}>Angle:</RowLabel><Dropdown $flex><DarkLabel>Degrees</DarkLabel><UpDown /></Dropdown></LabelRow>
                  <LabelRow><RowLabel $w={67}>Unit Scale:</RowLabel><Pill $flex><PillCell><ArrL /><CellText $grow $right>0.010000</CellText><ArrR /></PillCell></Pill></LabelRow>
                  <CheckRow><Check /><span>Separate Units</span></CheckRow>
                </PanelContent>
              </Panel>
              <Panel $pb={8}>
                <PanelHead><Tri open />Keying Sets<Grip /></PanelHead>
                <PanelContent>
                  <ListRow>
                    <ListBox><AddMini /><Grabber /></ListBox>
                    <ListCols><ListBtn><PlusI /></ListBtn><ListBtn $dim><MinusI c="#8a8a8a" /></ListBtn></ListCols>
                  </ListRow>
                </PanelContent>
              </Panel>
              <Panel><PanelHead $h={23}><Tri />Color Management<Grip /></PanelHead></Panel>
              <Panel><PanelHead $h={23}><Tri />Audio<Grip /></PanelHead></Panel>
              <Panel $pb={7}>
                <PanelHead><Tri open /><Check><CheckMark /></Check>&nbsp;Gravity<Grip /></PanelHead>
                <PanelContent $pt={8}>
                  <Pill $w={194}>
                    <PillCell $w={64}><ArrL /><CellText>:0m/s²</CellText><ArrR /></PillCell>
                    <PillCell $w={65} $div><ArrL /><CellText>:0m/s²</CellText><ArrR /></PillCell>
                    <PillCell $div><ArrL /><CellText>-9.8m/</CellText><ArrR /></PillCell>
                  </Pill>
                </PanelContent>
              </Panel>
              <Panel $pb={8}>
                <PanelHead><Tri open />Rigid Body World<Grip /></PanelHead>
                <PanelContent $pt={8}><FullBtn>Add Rigid Body World</FullBtn></PanelContent>
              </Panel>
              <Panel>
                <PanelHead><Tri open /><Check />&nbsp;Simplify<Grip /></PanelHead>
                <PanelContent $pt={11}>
                  <TwoCol>
                    <Col>
                      <ColLabel>Viewport:</ColLabel>
                      <Pill $dim $w={93}><PillCell><ArrL /><CellText>Subdivisio: 6</CellText><ArrR /></PillCell></Pill>
                      <Pill $dim $w={93}><Centered><CellText>Child : 1.000</CellText></Centered></Pill>
                    </Col>
                    <Col>
                      <ColLabel>Render:</ColLabel>
                      <Pill $dim $w={93}><PillCell><ArrL /><CellText>Subdivisio: 6</CellText><ArrR /></PillCell></Pill>
                      <Pill $dim $w={93}><Centered><CellText>Child : 1.000</CellText></Centered></Pill>
                    </Col>
                  </TwoCol>
                </PanelContent>
              </Panel>
            </PropBody>
            <VScroll $t={30} $h={652}><VThumb $h={570} /></VScroll>
          </Props>
        </RightCol>
      </Main>
    </Shell>
  );
}
